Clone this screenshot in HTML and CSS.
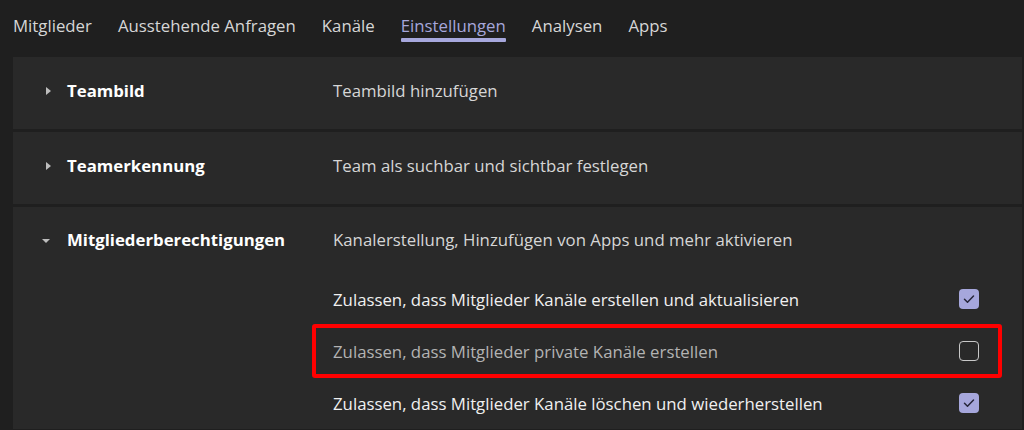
FILE: index.html
```html
<!DOCTYPE html>
<html lang="de">
<head>
  <meta charset="UTF-8">
  <meta name="viewport" content="width=device-width, initial-scale=1.0">
  <title>Team verwalten</title>
  <link rel="stylesheet" href="styles.css">
</head>
<body>
  <nav class="tabs">
    <a class="tab">Mitglieder</a>
    <a class="tab">Ausstehende Anfragen</a>
    <a class="tab">Kanäle</a>
    <a class="tab active">Einstellungen</a>
    <a class="tab">Analysen</a>
    <a class="tab">Apps</a>
  </nav>

  <div class="settings">
    <section class="setting">
      <div class="setting-head">
        <span class="caret caret-right"></span>
        <span class="setting-title">Teambild</span>
      </div>
      <div class="setting-desc">Teambild hinzufügen</div>
    </section>

    <section class="setting">
      <div class="setting-head">
        <span class="caret caret-right"></span>
        <span class="setting-title">Teamerkennung</span>
      </div>
      <div class="setting-desc">Team als suchbar und sichtbar festlegen</div>
    </section>

    <section class="setting open">
      <div class="setting-head">
        <span class="caret caret-down"></span>
        <span class="setting-title">Mitgliederberechtigungen</span>
      </div>
      <div class="setting-desc">Kanalerstellung, Hinzufügen von Apps und mehr aktivieren</div>

      <ul class="options">
        <li class="option">
          <span class="option-label">Zulassen, dass Mitglieder Kanäle erstellen und aktualisieren</span>
          <span class="checkbox checked">
            <svg viewBox="0 0 20 20" width="20" height="20"><path d="M5.5 10.3l3 3 6-6.2" fill="none" stroke="#26263a" stroke-width="1.5" stroke-linecap="round" stroke-linejoin="round"/></svg>
          </span>
        </li>
        <li class="option off highlight">
          <span class="option-label">Zulassen, dass Mitglieder private Kanäle erstellen</span>
          <span class="checkbox"></span>
        </li>
        <li class="option">
          <span class="option-label">Zulassen, dass Mitglieder Kanäle löschen und wiederherstellen</span>
          <span class="checkbox checked">
            <svg viewBox="0 0 20 20" width="20" height="20"><path d="M5.5 10.3l3 3 6-6.2" fill="none" stroke="#26263a" stroke-width="1.5" stroke-linecap="round" stroke-linejoin="round"/></svg>
          </span>
        </li>
      </ul>
    </section>
  </div>
</body>
</html>
```

FILE: styles.css
```css
body {
  margin: 0;
  padding: 0;
  background-color: #1f1f1f;
  font-family: "Open Sans", "Noto Sans", sans-serif;
  font-size: 16.8px;
  color: #d6d6d6;
  overflow: hidden;
}

.tabs {
  display: flex;
  gap: 26px;
  height: 44px;
  padding-left: 13px;
}

.tab {
  position: relative;
  padding-top: 14px;
  line-height: 24px;
  color: #d6d6d6;
  cursor: pointer;
}

.tab.active {
  color: #a6a7dc;
}

.tab.active::after {
  content: "";
  position: absolute;
  left: 0;
  right: 0;
  top: 38px;
  height: 4px;
  border-radius: 1px;
  background-color: #a6a7dc;
}

.settings {
  display: flex;
  flex-direction: column;
  gap: 3px;
  margin: 13px 2px 0 13px;
}

.setting {
  display: grid;
  grid-template-columns: 320px 1fr;
  align-items: center;
  background-color: #292929;
  padding: 22px 0 26px;
}

.setting.open {
  padding: 21px 0 0;
}

.setting-head {
  display: flex;
  align-items: center;
  padding-left: 31px;
}

.setting-title {
  color: #ffffff;
  font-weight: 700;
  line-height: 24px;
}

.setting-desc {
  line-height: 24px;
}

.caret {
  width: 0;
  height: 0;
}

.caret-right {
  margin-left: 2px;
  margin-right: 16px;
  border-top: 4px solid transparent;
  border-bottom: 4px solid transparent;
  border-left: 5px solid #bdbdbd;
}

.caret-down {
  margin-left: -2px;
  margin-right: 17px;
  margin-top: 2px;
  border-left: 4px solid transparent;
  border-right: 4px solid transparent;
  border-top: 4px solid #bdbdbd;
}

.options {
  grid-column: 2;
  list-style: none;
  margin: 21px 21px 0 -20px;
  padding: 0;
}

.option {
  display: flex;
  align-items: center;
  justify-content: space-between;
  height: 52px;
  padding: 0 22px 0 20px;
  color: #f0f0f0;
}

.option.off {
  color: #b3b3b3;
}

.option.highlight {
  outline: 4px solid #ff0000;
  outline-offset: -3px;
  border-radius: 2px;
}

.checkbox {
  width: 18px;
  height: 18px;
  border: 1px solid #c8c8c8;
  border-radius: 4px;
}

.checkbox.checked {
  width: 20px;
  height: 20px;
  border: none;
  background-color: #a6a7dc;
}

.checkbox svg {
  display: block;
}
```
